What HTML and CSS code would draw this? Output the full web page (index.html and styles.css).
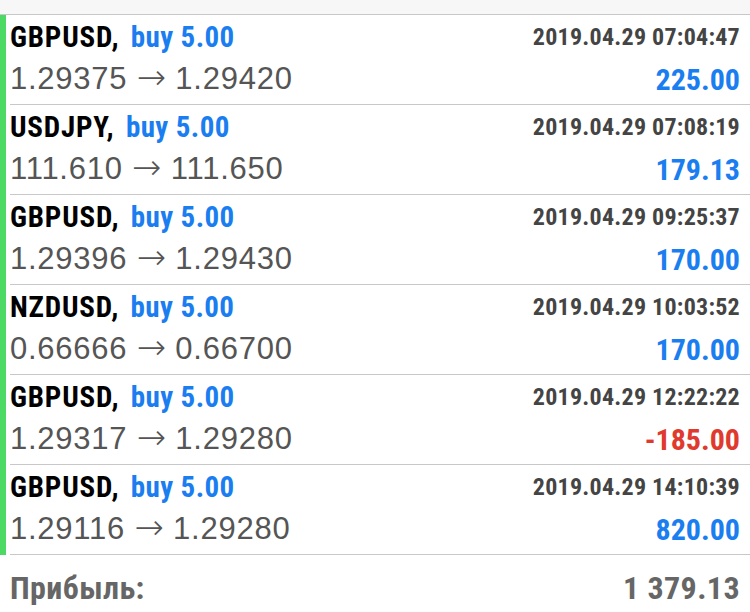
FILE: index.html
```html
<!DOCTYPE html>
<html lang="ru">
<head>
<meta charset="utf-8">
<link rel="stylesheet" href="styles.css">
</head>
<body>
<div class="top"></div>
<div class="list">
  <div class="row">
    <div class="line1"><span class="pair">GBPUSD, <span class="buy">buy 5.00</span></span><span class="date">2019.04.29 07:04:47</span></div>
    <div class="line2"><span class="price">1.29375 <span class="arrow">→</span> 1.29420</span><span class="amt">225.00</span></div>
  </div>
  <div class="row">
    <div class="line1"><span class="pair">USDJPY, <span class="buy">buy 5.00</span></span><span class="date">2019.04.29 07:08:19</span></div>
    <div class="line2"><span class="price">111.610 <span class="arrow">→</span> 111.650</span><span class="amt">179.13</span></div>
  </div>
  <div class="row">
    <div class="line1"><span class="pair">GBPUSD, <span class="buy">buy 5.00</span></span><span class="date">2019.04.29 09:25:37</span></div>
    <div class="line2"><span class="price">1.29396 <span class="arrow">→</span> 1.29430</span><span class="amt">170.00</span></div>
  </div>
  <div class="row">
    <div class="line1"><span class="pair">NZDUSD, <span class="buy">buy 5.00</span></span><span class="date">2019.04.29 10:03:52</span></div>
    <div class="line2"><span class="price">0.66666 <span class="arrow">→</span> 0.66700</span><span class="amt">170.00</span></div>
  </div>
  <div class="row">
    <div class="line1"><span class="pair">GBPUSD, <span class="buy">buy 5.00</span></span><span class="date">2019.04.29 12:22:22</span></div>
    <div class="line2"><span class="price">1.29317 <span class="arrow">→</span> 1.29280</span><span class="amt neg">-185.00</span></div>
  </div>
  <div class="row">
    <div class="line1"><span class="pair">GBPUSD, <span class="buy">buy 5.00</span></span><span class="date">2019.04.29 14:10:39</span></div>
    <div class="line2"><span class="price">1.29116 <span class="arrow">→</span> 1.29280</span><span class="amt">820.00</span></div>
  </div>
</div>
<div class="footer"><span>Прибыль:</span><span>1 379.13</span></div>
</body>
</html>
```
FILE: styles.css
```css
html, body {
  margin: 0;
  padding: 0;
  background: #ffffff;
}
body {
  width: 750px;
  height: 612px;
  overflow: hidden;
  font-family: "Liberation Sans", Arial, sans-serif;
}
.top {
  height: 15px;
  box-sizing: border-box;
  background: #f7f7f7;
  border-bottom: 1px solid #c8c8c8;
}
.list {
  border-left: 6px solid #4cd964;
  padding-left: 4px;
}
.row {
  height: 90px;
  box-sizing: border-box;
  border-bottom: 1px solid #c8c8c8;
  padding: 4px 10px 0 0;
}
.line1, .line2 {
  display: flex;
  justify-content: space-between;
  align-items: flex-start;
  white-space: nowrap;
}
.line1 {
  height: 36px;
  line-height: 36px;
}
.line2 {
  margin-top: 2px;
  height: 40px;
  line-height: 40px;
}
.pair, .date, .amt, .footer {
  font-family: Roboto, "Liberation Sans", sans-serif;
  font-stretch: 75%;
  font-weight: bold;
}
.pair {
  font-size: 29px;
  letter-spacing: 0.8px;
  color: #000;
}
.buy {
  margin-left: 4px;
  letter-spacing: 0.4px;
  color: #1a7ef0;
}
.date {
  font-size: 24px;
  letter-spacing: 0.25px;
  color: #444;
}
.price {
  font-size: 31px;
  letter-spacing: 0.75px;
  color: #555;
}
.arrow {
  font-family: "DejaVu Sans", sans-serif;
  font-weight: 200;
  font-size: 35px;
  letter-spacing: 0;
}
.amt {
  font-size: 30px;
  line-height: 45px;
  color: #1a7ef0;
}
.amt.neg {
  color: #e03a2e;
}
.footer {
  display: flex;
  justify-content: space-between;
  align-items: flex-start;
  padding: 13px 10px 0 10px;
  font-size: 32px;
  letter-spacing: 0.4px;
  line-height: 40px;
  color: #666;
}
```
